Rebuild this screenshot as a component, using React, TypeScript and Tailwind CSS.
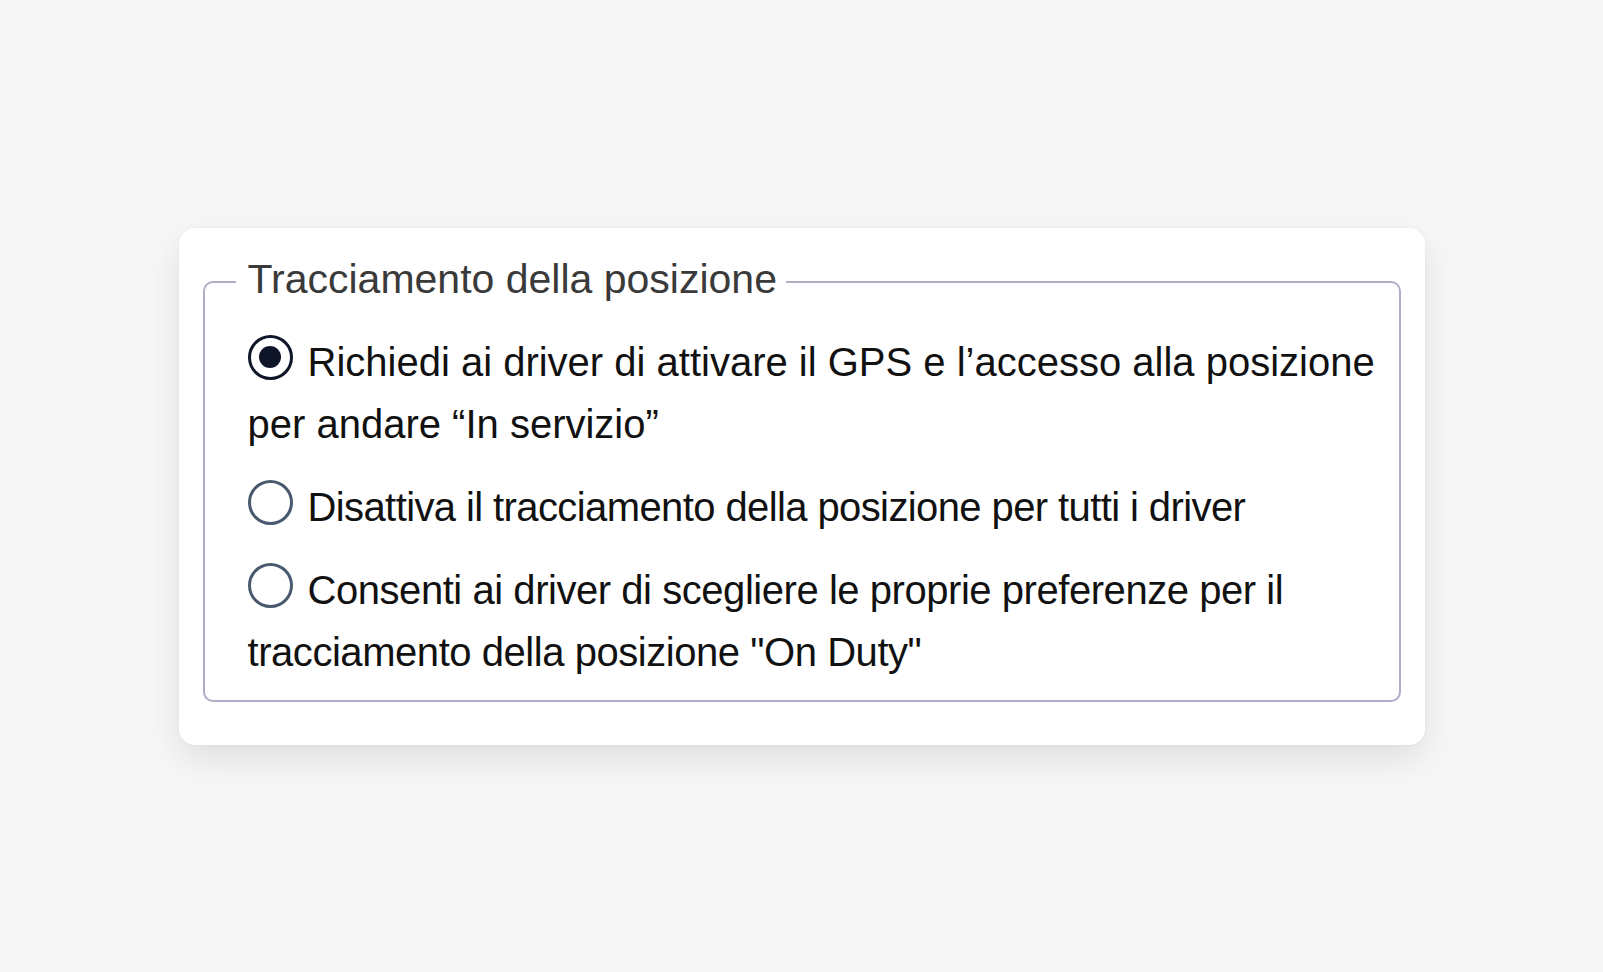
import React, { useState } from "react";

type Option = { id: string; label: string; tracking: string };

const OPTIONS: Option[] = [
  {
    id: "require",
    label:
      "Richiedi ai driver di attivare il GPS e l\u2019accesso alla posizione per andare \u201cIn servizio\u201d",
    tracking: "tracking-normal",
  },
  {
    id: "disable",
    label: "Disattiva il tracciamento della posizione per tutti i driver",
    tracking: "tracking-[-0.6px]",
  },
  {
    id: "choose",
    label:
      'Consenti ai driver di scegliere le proprie preferenze per il tracciamento della posizione "On Duty"',
    tracking: "tracking-[-0.45px]",
  },
];

function RadioDot({ checked }: { checked: boolean }) {
  return (
    <span
      className={
        checked
          ? "inline-block h-[45px] w-[45px] rounded-full border-[3px] border-[#0f1528] bg-white align-[-4px] mr-[15px]"
          : "inline-block h-[45px] w-[45px] rounded-full border-[3px] border-[#4a5a6e] bg-white align-[-4px] mr-[15px]"
      }
    >
      {checked && <span className="block h-[22px] w-[22px] m-[8.5px] rounded-full bg-[#0f1528]" />}
    </span>
  );
}

export default function App() {
  const [value, setValue] = useState("require");

  return (
    <div
      className="flex min-h-screen w-full items-center justify-center bg-[#f7f7f7]"
      style={{ fontFamily: '"Liberation Sans", Arial, sans-serif' }}
    >
      <div className="w-[1246px] rounded-[16px] bg-white px-6 pt-[27px] pb-[43px] shadow-[0_14px_36px_rgba(0,0,0,0.10),0_0_3px_rgba(0,0,0,0.05)]">
        <fieldset className="rounded-[10px] border-2 border-[#aeaec6] pl-[43px] pr-3 pt-[22px] pb-[17px]">
          <legend className="-ml-3 pl-3 pr-[9px] pb-[6px] text-[41px] leading-[48px] text-[#3a3a3a]">
            Tracciamento della posizione
          </legend>
          <div className="flex flex-col gap-[21px]">
            {OPTIONS.map((o) => (
              <label
                key={o.id}
                className={`block cursor-pointer text-[40px] leading-[62px] text-[#111111] ${o.tracking}`}
                onClick={() => setValue(o.id)}
              >
                <RadioDot checked={value === o.id} />
                {o.label}
              </label>
            ))}
          </div>
        </fieldset>
      </div>
    </div>
  );
}
